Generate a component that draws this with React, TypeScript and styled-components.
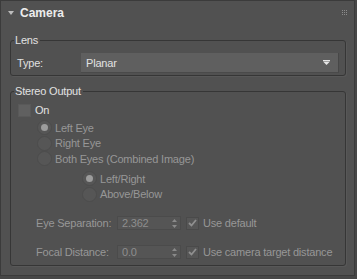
import styled, { createGlobalStyle } from "styled-components";

const GlobalStyle = createGlobalStyle`
  body {
    margin: 0;
    background: #474747;
    font-family: "Liberation Sans", Arial, sans-serif;
    font-size: 11px;
    letter-spacing: -0.2px;
  }
`;

const Panel = styled.div`
  box-sizing: border-box;
  width: 355px;
  height: 276px;
  background: #515151;
  border: 1px solid #3b3b3b;
`;

const Header = styled.div`
  height: 24px;
  display: flex;
  align-items: center;
  padding: 0 6px 0 7px;
`;

const Caret = styled.span`
  width: 0;
  height: 0;
  border-left: 3px solid transparent;
  border-right: 3px solid transparent;
  border-top: 4px solid #bdbdbd;
  margin-right: 6px;
`;

const Title = styled.span`
  font-size: 12px;
  font-weight: bold;
  letter-spacing: 0;
  color: #ececec;
`;

const Grip = styled.svg`
  margin-left: auto;
`;

const Group = styled.div<{ $gap?: number }>`
  position: relative;
  margin: ${(p) => p.$gap ?? 15}px 8px 0 9px;
  border: 1px solid #363636;
  border-radius: 3px;
  box-shadow: 1px 1px 0 #585858;
`;

const Legend = styled.span`
  position: absolute;
  top: -8px;
  left: 3px;
  padding: 0 2px 0 1px;
  background: #515151;
  color: #e2e2e2;
  line-height: 15px;
`;

const LensBody = styled.div`
  display: flex;
  align-items: center;
  padding: 12px 6px 2px 6px;
`;

const FieldLabel = styled.span<{ $w: number; $dim?: boolean }>`
  width: ${(p) => p.$w}px;
  color: ${(p) => (p.$dim ? "#979797" : "#e0e0e0")};
  flex-shrink: 0;
`;

const Select = styled.div`
  flex: 1;
  height: 20px;
  box-sizing: border-box;
  display: flex;
  align-items: center;
  justify-content: space-between;
  padding: 0 8px 0 5px;
  background: #5f5f5f;
  border-right: 1px solid #474747;
  border-bottom: 1px solid #4a4a4a;
  color: #e2e2e2;
`;

const StereoBody = styled.div`
  display: flex;
  flex-direction: column;
  padding: 11px 0 6px 7px;
`;

const Row = styled.div<{ $h?: number; $indent?: number; $mt?: number }>`
  display: flex;
  align-items: center;
  height: ${(p) => p.$h ?? 15.5}px;
  margin-left: ${(p) => p.$indent ?? 0}px;
  margin-top: ${(p) => p.$mt ?? 0}px;
`;

const Box = styled.span<{ $dim?: boolean; $size?: number }>`
  box-sizing: border-box;
  width: ${(p) => p.$size ?? 13}px;
  height: ${(p) => p.$size ?? 13}px;
  background: ${(p) => (p.$dim ? "#565656" : "#606060")};
  border: 1px solid ${(p) => (p.$dim ? "#4a4a4a" : "#595959")};
  display: flex;
  align-items: center;
  justify-content: center;
  flex-shrink: 0;
`;

const Radio = styled.span<{ $on?: boolean }>`
  box-sizing: border-box;
  width: 15px;
  height: 15px;
  border-radius: 50%;
  background: #565656;
  border: 1px solid #4c4c4c;
  display: flex;
  align-items: center;
  justify-content: center;
  flex-shrink: 0;
  &::after {
    content: "";
    width: 7px;
    height: 7px;
    border-radius: 50%;
    background: ${(p) => (p.$on ? "#9c9c9c" : "transparent")};
  }
`;

const Text = styled.span<{ $dim?: boolean; $ml?: number }>`
  margin-left: ${(p) => p.$ml ?? 3}px;
  color: ${(p) => (p.$dim ? "#979797" : "#e2e2e2")};
  white-space: nowrap;
`;

const Spinner = styled.div`
  box-sizing: border-box;
  width: 64px;
  height: 14px;
  display: flex;
  align-items: center;
  justify-content: space-between;
  padding: 0 3px 0 4px;
  background: #555555;
  border: 1px solid #4b4b4b;
  color: #8e8e8e;
  margin-right: 5px;
`;

const Check = () => (
  <svg width="9" height="8" viewBox="0 0 9 8">
    <path d="M1 4 L3.5 6.5 L8 1" stroke="#8f8f8f" strokeWidth="1.8" fill="none" />
  </svg>
);

const Arrows = () => (
  <svg width="5" height="9" viewBox="0 0 5 9">
    <path d="M2.5 0 L5 3 L0 3 Z M0 6 L5 6 L2.5 9 Z" fill="#8a8a8a" />
  </svg>
);

const DropArrow = () => (
  <svg width="7" height="5" viewBox="0 0 7 5">
    <rect x="0" y="0" width="7" height="1" fill="#e6e6e6" />
    <path d="M0 1.5 L7 1.5 L3.5 5 Z" fill="#e6e6e6" />
  </svg>
);

const dots = [0, 1, 2].flatMap((r) => [0, 1, 2].map((c) => [c * 2, r * 2]));

export default function App() {
  return (
    <>
      <GlobalStyle />
      <Panel>
        <Header>
          <Caret />
          <Title>Camera</Title>
          <Grip width="6" height="6" viewBox="0 0 6 6">
            {dots.map(([x, y], i) => (
              <rect key={i} x={x} y={y} width="1" height="1" fill="#8c8c8c" />
            ))}
          </Grip>
        </Header>

        <Group>
          <Legend>Lens</Legend>
          <LensBody>
            <FieldLabel $w={64}>Type:</FieldLabel>
            <Select>
              Planar
              <DropArrow />
            </Select>
          </LensBody>
        </Group>

        <Group>
          <Legend>Stereo Output</Legend>
          <StereoBody>
            <Row $h={14}>
              <Box />
              <Text $ml={4}>On</Text>
            </Row>
            <Row $indent={19} $mt={3}>
              <Radio $on />
              <Text $dim>Left Eye</Text>
            </Row>
            <Row $indent={19}>
              <Radio />
              <Text $dim>Right Eye</Text>
            </Row>
            <Row $indent={19}>
              <Radio />
              <Text $dim>Both Eyes (Combined Image)</Text>
            </Row>
            <Row $indent={64} $mt={4.5}>
              <Radio $on />
              <Text $dim>Left/Right</Text>
            </Row>
            <Row $indent={64}>
              <Radio />
              <Text $dim>Above/Below</Text>
            </Row>
            <Row $h={14} $indent={18} $mt={14}>
              <FieldLabel $w={81} $dim>Eye Separation:</FieldLabel>
              <Spinner>
                2.362
                <Arrows />
              </Spinner>
              <Box $dim $size={13}>
                <Check />
              </Box>
              <Text $dim $ml={4}>Use default</Text>
            </Row>
            <Row $h={14} $indent={18} $mt={15}>
              <FieldLabel $w={81} $dim>Focal Distance:</FieldLabel>
              <Spinner>
                0.0
                <Arrows />
              </Spinner>
              <Box $dim $size={13}>
                <Check />
              </Box>
              <Text $dim $ml={4}>Use camera target distance</Text>
            </Row>
          </StereoBody>
        </Group>
      </Panel>
    </>
  );
}
